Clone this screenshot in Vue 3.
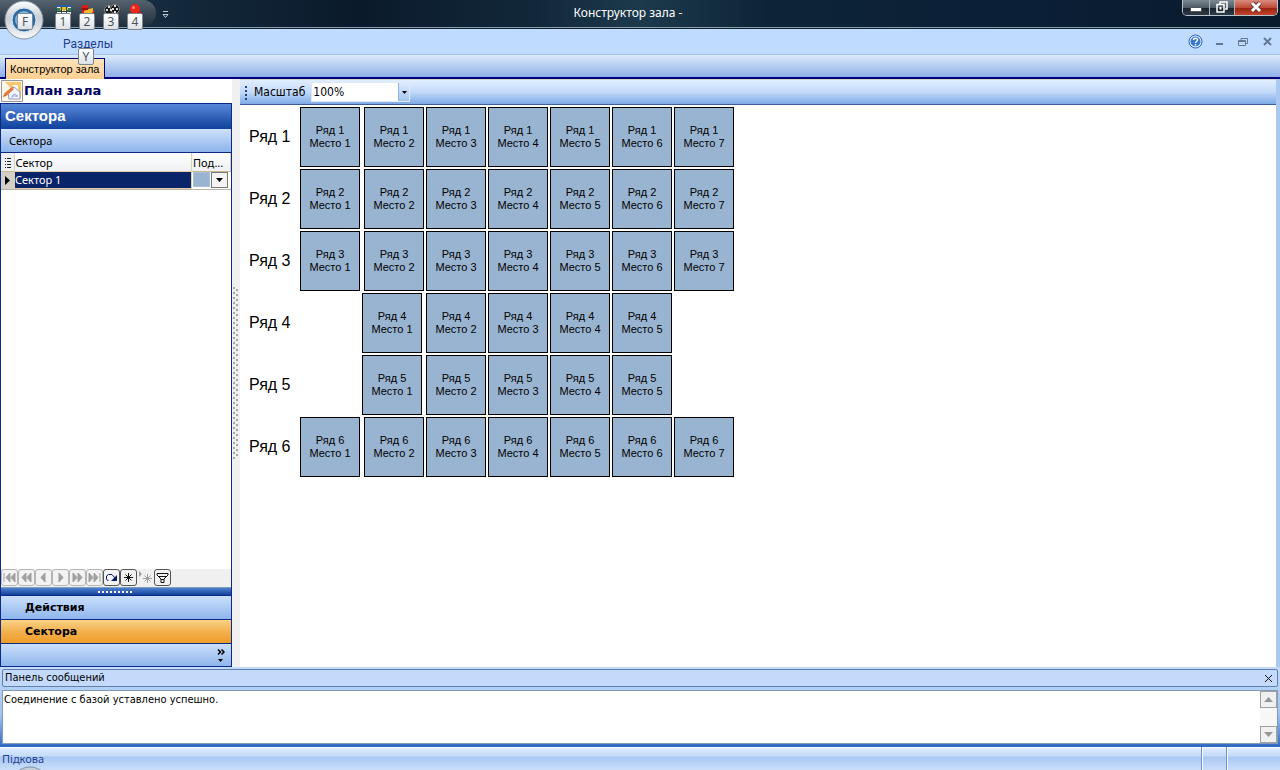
<script setup>
import { ref } from 'vue'

const scale = ref('100%')
const scales = ['50%', '75%', '100%', '150%', '200%']
const log = ref('Соединение с базой уставлено успешно.')
const rows = [
  { n: 1, seats: 7 },
  { n: 2, seats: 7 },
  { n: 3, seats: 7 },
  { n: 4, seats: 5, inset: true },
  { n: 5, seats: 5, inset: true },
  { n: 6, seats: 7 }
]
const nav = [
  { name: 'В начало', d: 'M2 3V12M8 3L4 7.5L8 12ZM13 3L9 7.5L13 12Z', off: true },
  { name: 'Страница назад', d: 'M7 3L3 7.5L7 12ZM12 3L8 7.5L12 12Z', off: true },
  { name: 'Назад', d: 'M9 3L5 7.5L9 12Z', off: true },
  { name: 'Вперёд', d: 'M6 3L10 7.5L6 12Z', off: true },
  { name: 'Страница вперёд', d: 'M3 3L7 7.5L3 12ZM8 3L12 7.5L8 12Z', off: true },
  { name: 'В конец', d: 'M2 3L6 7.5L2 12ZM7 3L11 7.5L7 12ZM13 3V12', off: true },
  { name: 'Обновить', d: 'M4.5 10.500H3.500L2.500 9V6L4.500 4.500H8L11 8', d2: 'M13 5V11H7Z', blue: true },
  { name: 'Закладка', d: 'M7.500 3V12M3 7.500H12M4.500 4.500L10.500 10.500M10.500 4.500L4.500 10.500' },
  { name: 'К закладке', d: 'M9.500 4V13M5 8.500H14M6.500 5.500L12.500 11.500M12.500 5.500L6.500 11.500', d2: 'M1 1L4 4L1 7Z', off: true, flat: true },
  { name: 'Фильтр', d: 'M2 3.500H13V5L9 9V12.500H6V9L2 5ZM4 6.500H11M6 9.500H9' }
]
</script>

<template>
  <div class="app">
    <header class="title">
      <div class="quick">
        <button aria-label="Меню" class="orb">
          <svg viewBox="0 0 40 40" width="40" height="40">
            <defs>
              <linearGradient id="rim" x2="0" y2="1">
                <stop offset="0" stop-color="#fff" /><stop offset=".45" stop-color="#c9ced3" /><stop offset="1" stop-color="#f7f9fa" />
              </linearGradient>
            </defs>
            <circle cx="20" cy="20" r="19" fill="url(#rim)" stroke="#8291a0" />
            <circle cx="20" cy="20" r="12" fill="#286aa5" stroke="#d9e8f2" />
            <circle cx="20" cy="20" r="9" fill="#7fb4db" />
          </svg>
          <span class="tip">F</span>
        </button>
        <button class="tool" aria-label="Таблица">
          <svg viewBox="0 0 16 12" width="16" height="12">
            <path fill="#f5f3df" d="M1 2H15V12H1Z" /><path fill="#2261a8" d="M1 2H15V4H1Z" />
            <path fill="#2d8a4c" d="M1 5H5V8H1ZM11 5H15V8H11Z" /><path fill="#e9b927" d="M4 4H12V7H9V9H7V7H4Z" /><path stroke="#345" d="M1 8.500H15M5.500 4V12M10.500 4V12" />
          </svg>
          <span class="tip">1</span>
        </button>
        <button class="tool" aria-label="Папка">
          <svg viewBox="0 0 16 12" width="16" height="12">
            <path fill="#d82114" d="M1 4L4 2H8V5L14 8V12H3Z" /><path fill="#f4b72f" d="M4 8L9 6L13 5V8L11 12H4Z" /><path fill="#8f150d" d="M1 5H8V7H3Z" />
          </svg>
          <span class="tip">2</span>
        </button>
        <button class="tool" aria-label="Фильм">
          <svg viewBox="0 0 16 12" width="16" height="12">
            <circle cx="5" cy="7" r="4.500" fill="#181818" stroke="#888" /><circle cx="11" cy="6" r="4.500" fill="#181818" stroke="#888" />
            <path fill="#ddd" d="M4 3H6V5H4ZM2 6H4V8H2ZM6 6H8V8H6ZM10 2H12V4H10ZM8 5H10V7H8ZM12 5H14V7H12ZM10 8H12V10H10Z" />
          </svg>
          <span class="tip">3</span>
        </button>
        <button class="tool" aria-label="Запись">
          <svg viewBox="0 0 16 12" width="16" height="12"><circle cx="7" cy="6" r="5" fill="#ed2418" /><circle cx="5.500" cy="4.500" r="1.500" fill="#ff8578" /><path fill="#b51a13" d="M10 9H14V12H8Z" /></svg>
          <span class="tip">4</span>
        </button>
      </div>
      <button class="more" aria-label="Настроить панель">
        <svg viewBox="0 0 7 8" width="7" height="8"><path fill="none" stroke="#b9cbdd" d="M1 .5H6M1 3.500H6L3.500 6.500Z" /></svg>
      </button>
      <h1>Конструктор зала -</h1>
      <div class="window">
        <button aria-label="Свернуть"><svg viewBox="0 0 26 15" width="26" height="15"><path fill="#fff" stroke="#555" d="M7.500 7.500H18.500V11.500H7.500Z" /></svg></button>
        <button aria-label="Восстановить"><svg viewBox="0 0 24 15" width="24" height="15"><path fill="none" stroke="#fff" stroke-width="1.500" d="M10 4V2H17V9H15M7 4.500H14V12H7Z" /><path fill="#fff" d="M9.500 7H11.500V9.500H9.500Z" /></svg></button>
        <button aria-label="Закрыть" class="red"><svg viewBox="0 0 42 15" width="42" height="15"><path fill="none" stroke="#633" stroke-width="5" d="M17 3L25 11M25 3L17 11" /><path fill="none" stroke="#fff" stroke-width="3" d="M17 3L25 11M25 3L17 11" /></svg></button>
      </div>
    </header>

    <div class="ribbon">
      <a href="#sections" class="sections">Разделы<span class="tip">Y</span></a>
      <div class="mdi">
        <button aria-label="Справка"><svg viewBox="0 0 15 15" width="15" height="15"><circle cx="7.500" cy="7.500" r="6.500" fill="#eef6ff" stroke="#2460bd" /><circle cx="7.500" cy="7.500" r="5" fill="#3978d2" /><path d="M5.500 6C5.500 3.500 9.500 3.500 9.500 6C9.500 7.500 7.500 7.500 7.500 9M7.500 10V11.500" fill="none" stroke="#fff" stroke-width="1.500" /></svg></button>
        <button aria-label="Свернуть окно"><svg viewBox="0 0 9 9" width="9" height="9"><path fill="#637894" d="M1 6H8V8H1Z" /></svg></button>
        <button aria-label="Восстановить окно"><svg viewBox="0 0 10 9" width="10" height="9"><path fill="none" stroke="#637894" d="M3 3V1.500H9.500V6.500H7M.5 3.500H7.500V8.500H.5ZM.5 4.500H7.500" /></svg></button>
        <button aria-label="Закрыть окно"><svg viewBox="0 0 9 9" width="9" height="9"><path stroke="#637894" stroke-width="2" d="M1 1L8 8M8 1L1 8" /></svg></button>
      </div>
    </div>
    <nav class="tabs"><a href="#hall">Конструктор зала</a></nav>

    <div class="body">
      <aside>
        <h2 class="plan">
          <svg viewBox="0 0 22 22" width="22" height="22">
            <path fill="#fff8ea" stroke="#969696" d="M.5 .5H21.500V21.500H.5Z" />
            <path fill="#f7c66d" d="M4 2H20V18Z" /><path fill="#fffaf0" d="M11 5H17V11Z" />
            <path fill="#f5f8ff" stroke="#8f98c4" d="M7 12L13 7L19 12V19H8Z" /><path fill="none" stroke="#9aa2d4" d="M11 18C11 13 16 13 16 17M12 16H17" />
            <path stroke="#e07a35" stroke-width="3" d="M4 15L12 8" /><path fill="#b5612c" d="M2 17L3 14L5 16Z" />
          </svg>
          План зала
        </h2>
        <section class="side">
          <h3>Сектора</h3>
          <h4>Сектора</h4>
          <div class="grid">
            <table>
              <thead>
                <tr>
                  <th class="mark"><svg viewBox="0 0 7 10" width="7" height="10"><path stroke="#222" d="M0 .5H1M2 .5H6M0 3.500H1M2 3.500H6M0 6.500H1M2 6.500H6M0 9.500H1M2 9.500H6" /></svg></th>
                  <th>Сектор</th><th class="color">Под...</th>
                </tr>
              </thead>
              <tbody>
                <tr>
                  <td class="mark"><svg viewBox="0 0 5 9" width="5" height="9"><path d="M0 0L5 4.500L0 9Z" /></svg></td>
                  <td class="picked">Сектор 1</td>
                  <td class="color"><div><span class="swatch"></span><button aria-label="Выбрать цвет"><svg viewBox="0 0 7 4" width="7" height="4"><path d="M0 0H7L3.500 4Z" /></svg></button></div></td>
                </tr>
              </tbody>
            </table>
            <div class="pager">
              <button v-for="b in nav" :key="b.name" :aria-label="b.name" :disabled="b.off" :class="{ flat: b.flat, blue: b.blue }">
                <svg viewBox="0 0 15 15" width="15" height="15"><path :d="b.d" :fill="b.off && !b.flat ? 'currentColor' : 'none'" stroke="currentColor" /><path v-if="b.d2" :d="b.d2" fill="currentColor" /></svg>
              </button>
            </div>
          </div>
          <div class="grip"><svg viewBox="0 0 36 3" width="36" height="3"><path d="M0 2H36" stroke="#fff" stroke-width="2" stroke-dasharray="2 2" /></svg></div>
          <button class="group">Действия</button>
          <button class="group active">Сектора</button>
          <div class="overflow">
            <button aria-label="Настроить кнопки"><svg viewBox="0 0 8 13" width="8" height="13"><path fill="none" stroke="#000" stroke-width="1.500" d="M1 .5L3.500 3L1 5.500M4.500 .5L7 3L4.500 5.500" /><path d="M1 10H6L3.500 13Z" /></svg></button>
          </div>
        </section>
      </aside>
      <div class="splitter"><i></i></div>
      <main>
        <div class="toolbar">
          <label for="scale">Масштаб</label>
          <div class="combo">
            <select id="scale" v-model="scale"><option v-for="s in scales" :key="s">{{ s }}</option></select>
            <span class="arrow"><svg viewBox="0 0 5 3" width="5" height="3"><path d="M0 0H5L2.500 3Z" /></svg></span>
          </div>
        </div>
        <div class="hall">
          <div v-for="r in rows" :key="r.n" class="row" :class="{ inset: r.inset }">
            <span class="name">Ряд {{ r.n }}</span>
            <button v-for="s in r.seats" :key="s" class="seat">Ряд {{ r.n }}<br />Место {{ s }}</button>
          </div>
        </div>
      </main>
    </div>

    <section class="messages">
      <div class="head">
        <label for="log">Панель сообщений</label>
        <button aria-label="Закрыть панель"><svg viewBox="0 0 9 9" width="9" height="9"><path stroke="#111" d="M1 1L8 8M8 1L1 8" /></svg></button>
      </div>
      <div class="box">
        <textarea id="log" v-model="log" readonly></textarea>
        <div class="scroll">
          <button aria-label="Вверх"><svg viewBox="0 0 9 5" width="9" height="5"><path fill="#969696" d="M0 5H9L4.500 0Z" /></svg></button>
          <button aria-label="Вниз"><svg viewBox="0 0 9 5" width="9" height="5"><path fill="#969696" d="M0 0H9L4.500 5Z" /></svg></button>
        </div>
      </div>
    </section>
    <footer><span>Підкова</span><i></i><i></i>
      <svg class="orbtop" viewBox="0 0 40 40" width="40" height="40"><circle cx="20" cy="20" r="19" fill="#c5d0da" stroke="#7d93ab" /></svg>
    </footer>
  </div>
</template>

<style>
html, body, #app { height: 100%; }
body { margin: 0; overflow: hidden; }
</style>

<style scoped>
* { box-sizing: border-box; }
.app { height: 100%; display: flex; flex-direction: column; font: 11px/14px "Noto Sans", sans-serif; color: #000; background: #bfdbff; }
button, select, textarea { font: inherit; color: inherit; margin: 0; padding: 0; border: 0; background: none; border-radius: 0; }
h1, h2, h3, h4 { margin: 0; }
a { color: inherit; text-decoration: none; }
svg { display: block; flex: none; }

.title { height: 29px; flex: none; display: flex; align-items: flex-start; position: relative; z-index: 2; background: linear-gradient(90deg, #2a3f54, #13273a 15%, #0a1a2b 28%, #12283a 42%, #1c3a4c 50%, #0d2436 60%, #0b1f36 80%, #081a2c); border-bottom: 1px solid #10202f; box-shadow: inset 0 -1px #8b9eac; }
.quick { height: 26px; width: 156px; display: flex; align-items: flex-start; background: linear-gradient(#56636f, #3a4855 50%, #222f3d); border-radius: 0 13px 13px 0; }
.orb { position: relative; width: 40px; height: 40px; margin: 0 8px 0 4px; }
.orb .tip { position: absolute; left: 13px; top: 13px; }
.tool { position: relative; width: 24px; height: 26px; padding: 3px 4px; display: flex; align-items: flex-start; }
.tool .tip { position: absolute; left: 3px; top: 13px; }
.tip { width: 16px; height: 17px; border: 1px solid #7d868f; border-radius: 2px; background: linear-gradient(#fff, #dde2e8); color: #4c535c; font: 12px/15px "Noto Sans", sans-serif; text-align: center; }
.more { margin: 11px 0 0 6px; }
h1 { position: absolute; left: 0; right: 24px; top: 5px; text-align: center; font: 12px/16px "Noto Sans", sans-serif; color: #fff; pointer-events: none; }
.window { margin: 0 2px 0 auto; display: flex; height: 16px; border: 1px solid #b9c3ca; border-top: 0; border-radius: 0 0 5px 5px; overflow: hidden; }
.window button { background: linear-gradient(#7c8891, #4e5b66 50%, #14202b 51%, #303d48); border-right: 1px solid #aab4bb; }
.window .red { background: linear-gradient(#d98c80, #c04b38 50%, #97200f 51%, #c4452c); border: 0; }

.ribbon { height: 26px; flex: none; display: flex; justify-content: space-between; background: #bfdbff; border-bottom: 1px solid #a5bfe6; }
.sections { position: relative; z-index: 3; margin-left: 63px; padding-top: 8px; font: 12px/14px Roboto, "Noto Sans", sans-serif; color: #1e3c90; }
.sections .tip { position: absolute; left: 15px; top: 19px; }
.mdi { display: flex; align-items: center; padding: 0 1px 0 0; }
.mdi button { width: 24px; display: grid; place-items: center; }
.tabs { height: 24px; flex: none; display: flex; align-items: flex-end; padding-left: 5px; background: linear-gradient(#dce9fb, #b5cdf0 50%, #90b0e8); border-bottom: 2px solid #00007a; }
.tabs a { height: 21px; margin-bottom: -2px; padding: 3px 5px 0 4px; border: 1px solid #00007a; border-bottom: 0; background: linear-gradient(#fce3bb, #ffcf92); font: 11px/15px "Liberation Sans", sans-serif; }

.body { flex: 1; min-height: 0; display: flex; background: #fff; border-right: 4px solid #a9c8f2; }
aside { width: 232px; flex: none; display: flex; flex-direction: column; }
.plan { height: 24px; flex: none; display: flex; align-items: center; gap: 1px; padding: 0 1px; font: bold 13px/18px "DejaVu Sans", sans-serif; color: #00005e; }
.side { flex: 1; min-height: 0; display: flex; flex-direction: column; border: 1px solid #0a2a86; }
h3 { height: 25px; flex: none; padding-left: 4px; font: bold 15px/24px "Liberation Sans", sans-serif; color: #fff; background: linear-gradient(#5788d8, #0f409c); }
h4 { height: 24px; flex: none; padding-left: 8px; font: 11px/24px "Noto Sans", sans-serif; background: linear-gradient(#cfe1fc, #8db4ea); border-bottom: 1px solid #0a2a86; }
.grid { flex: 1; min-height: 0; display: flex; flex-direction: column; justify-content: space-between; border-bottom: 1px solid #7f9db9; }
table { width: 100%; table-layout: fixed; border-collapse: collapse; }
th { height: 18px; padding: 2px 1px 0; text-align: left; font-weight: normal; line-height: 14px; background: linear-gradient(#fff, #eef0f2); border-right: 1px solid #d5d2c4; border-bottom: 1px solid #c9b98e; }
td { height: 18px; padding: 0 1px; border-bottom: 1px solid #b8b4a8; }
.mark { width: 13px; padding-left: 4px; background: #eef0f2; }
td.mark { background: #d4d0c8; }
.color { width: 39px; }
td.color { border-left: 1px solid #d4d0c8; }
.picked { background: #0a246a; color: #fff; outline: 1px solid #e3cfa1; outline-offset: -1px; }
.color div { display: flex; }
.swatch { width: 17px; height: 15px; background: #99b4d1; border: 1px solid #a9bfd9; }
.color button { width: 17px; height: 16px; display: grid; place-items: center; background: #f4f4f4; border: 1px solid #777; margin-left: 1px; }
.pager { display: flex; height: 18px; background: #f0f0f0; }
.pager button { width: 17px; height: 17px; display: grid; place-items: center; border: 1px solid #555; border-radius: 3px; background: #f2f2f2; color: #111; }
.pager .blue { color: #0a1a6a; }
.pager button:disabled { color: #a0a0a0; border-color: #b5b5b5; }
.pager .flat:disabled { border-color: transparent; background: none; }
.grip { height: 7px; flex: none; display: grid; place-items: center; background: linear-gradient(#4f80d0, #12409a); }
.group { height: 24px; flex: none; padding-left: 24px; text-align: left; font: bold 11px/22px "DejaVu Sans", sans-serif; background: linear-gradient(#cbdffc, #8fb6ec); border-top: 1px solid #0a2a86; }
.group.active { background: linear-gradient(#fad287, #f2b04e 50%, #ee9d27); }
.overflow { height: 23px; flex: none; display: flex; justify-content: flex-end; padding: 4px 6px; background: linear-gradient(#cbdffc, #8fb6ec); border-top: 1px solid #0a2a86; }
.splitter { width: 8px; flex: none; display: grid; place-items: center; background: #f0f0f0; }
.splitter i { width: 6px; height: 172px; background-image: radial-gradient(circle at 1px 1px, #a6a6a6 1px, transparent 1px), radial-gradient(circle at 4px 3px, #a6a6a6 1px, transparent 1px); background-size: 6px 5px; }
main { flex: 1; min-width: 0; }
.toolbar { height: 26px; display: flex; align-items: center; padding-left: 14px; gap: 6px; background: linear-gradient(#e2eeff, #c3dafa 50%, #7fabe6); border-top: 1px solid #d4d0c8; border-bottom: 1px solid #3d5f98; position: relative; }
.toolbar::before { content: ""; position: absolute; left: 5px; top: 6px; width: 2px; height: 14px; background: repeating-linear-gradient(#27437c 0 2px, transparent 2px 4px); }
.toolbar label { font: 12px/14px "DejaVu Sans Condensed", sans-serif; }
.combo { position: relative; width: 99px; height: 20px; background: #fff; border: 1px solid #dce9fb; }
.combo select { appearance: none; width: 100%; height: 18px; padding-left: 1px; font: 12px/18px "DejaVu Sans Condensed", sans-serif; }
.arrow { position: absolute; right: 0; top: 0; width: 11px; height: 18px; display: grid; place-items: center; background: linear-gradient(#dcebff, #a5c5f0); border-left: 1px solid #8fb0e0; pointer-events: none; }
.hall { padding: 2px 9px; display: flex; flex-direction: column; gap: 2px; }
.row { display: flex; gap: 2px; align-items: center; font-family: "Liberation Sans", sans-serif; }
.name { width: 49px; font-size: 16px; line-height: 20px; }
.inset .name { width: 111px; }
.seat { width: 60px; height: 60px; border: 1px solid #000; background: #99b4d1; font-size: 11px; line-height: 13px; }
.name + .seat { margin-right: 2px; }

.messages { flex: none; padding: 2px 2px 3px; font-family: "DejaVu Sans Condensed", "Noto Sans", sans-serif; background: linear-gradient(#c3dafa, #a3c2f0 60%, #2f68c2); }
.head { height: 18px; display: flex; align-items: center; justify-content: space-between; padding: 0 4px 0 2px; border: 1px solid #5f7fae; border-radius: 2px; background: #c3dafa; }
.box { display: flex; height: 54px; margin-top: 3px; background: #fff; border: 1px solid #7f9db9; }
textarea { flex: 1; resize: none; outline: none; padding: 2px 1px; line-height: 14px; }
.scroll { width: 17px; display: flex; flex-direction: column; justify-content: space-between; background: #f7f7f7; }
.scroll button { height: 17px; display: grid; place-items: center; border: 1px solid #a0a0a0; background: #f0f0f0; }
footer { height: 23px; flex: none; display: flex; position: relative; overflow: hidden; padding-right: 52px; gap: 23px; background: linear-gradient(#fff, #dbe9fc 2px, #c5dbf9 9px, #a9c8f2 10px, #c9defa); color: #1e3c90; }
footer span { flex: 1; padding: 4px 2px; line-height: 16px; }
footer i { width: 2px; height: 23px; background: #6e94cc; border-right: 1px solid #fff; }
.orbtop { position: absolute; left: 10px; top: 19px; }
</style>
